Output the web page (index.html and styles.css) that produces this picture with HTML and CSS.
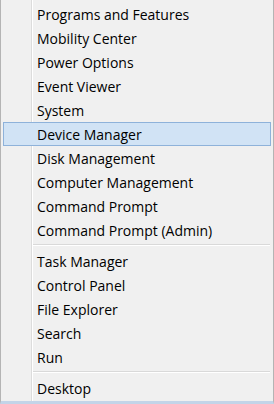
FILE: index.html
```html
<!DOCTYPE html>
<html>
<head>
<meta charset="utf-8">
<link rel="stylesheet" href="styles.css">
</head>
<body>
<div class="menu">
  <div class="item">Programs and Features</div>
  <div class="item">Mobility Center</div>
  <div class="item">Power Options</div>
  <div class="item">Event Viewer</div>
  <div class="item">System</div>
  <div class="item active">Device Manager</div>
  <div class="item">Disk Management</div>
  <div class="item">Computer Management</div>
  <div class="item">Command Prompt</div>
  <div class="item">Command Prompt (Admin)</div>
  <div class="sep"></div>
  <div class="item">Task Manager</div>
  <div class="item">Control Panel</div>
  <div class="item">File Explorer</div>
  <div class="item">Search</div>
  <div class="item">Run</div>
  <div class="sep"></div>
  <div class="item">Desktop</div>
</div>
</body>
</html>
```
FILE: styles.css
```css
html, body {
  margin: 0;
  padding: 0;
  background: #f0f0f0;
}
.menu {
  box-sizing: border-box;
  width: 274px;
  height: 404px;
  display: flex;
  flex-direction: column;
  padding-top: 2px;
  border-left: 1px solid #b4b4b4;
  border-right: 1px solid #b4b4b4;
  border-bottom: 3px solid #c3d4e8;
  background:
    linear-gradient(to right, transparent 30px, #dcdcdc 30px, #dcdcdc 31px, #ffffff 31px, #ffffff 32px, transparent 32px),
    #f0f0f0;
  font-family: "Open Sans", "Noto Sans", sans-serif;
  font-size: 14px;
  color: #000;
}
.item {
  box-sizing: border-box;
  height: 24px;
  margin: 0 2px;
  padding-left: 33px;
  border: 1px solid transparent;
  display: flex;
  align-items: center;
  white-space: nowrap;
}
.item.active {
  background: #d1e3f5;
  border-color: #8eb2da;
}
.sep {
  height: 7px;
  margin-left: 32px;
  margin-right: 3px;
  box-sizing: border-box;
  border-top: 2px solid transparent;
  background: linear-gradient(#d9d9d9 0 1px, #ffffff 1px 2px, transparent 2px);
  background-clip: content-box;
}
```
